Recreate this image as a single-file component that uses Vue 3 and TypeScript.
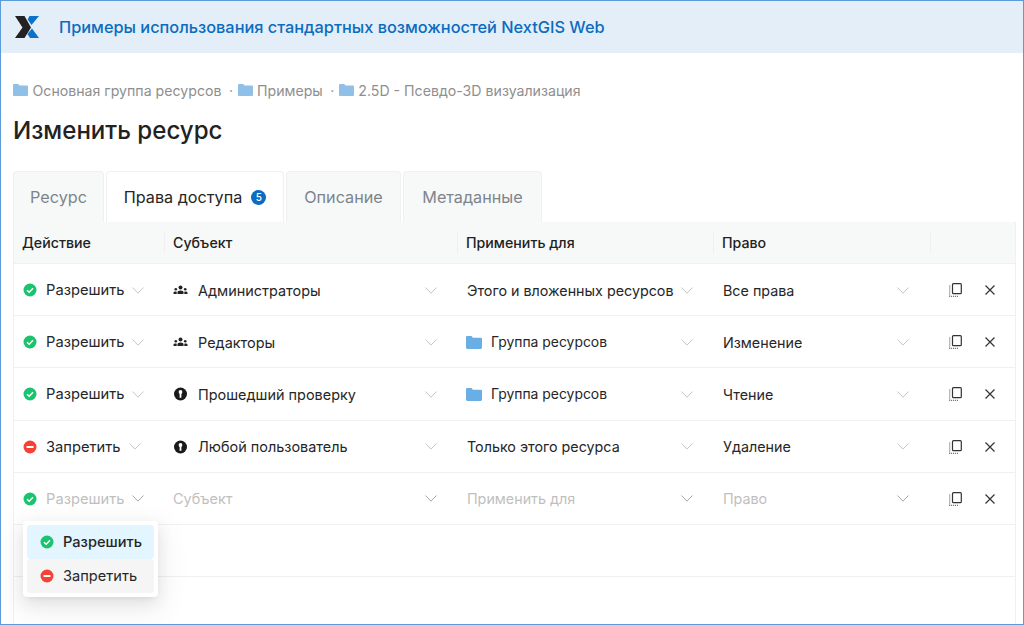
<script setup lang="ts">
interface Row {
  allow: boolean
  action: string
  subjectIcon: '' | 'group' | 'info'
  subject: string
  folder: boolean
  scope: string
  right: string
  placeholder?: boolean
}

const rows: Row[] = [
  { allow: true, action: 'Разрешить', subjectIcon: 'group', subject: 'Администраторы', folder: false, scope: 'Этого и вложенных ресурсов', right: 'Все права' },
  { allow: true, action: 'Разрешить', subjectIcon: 'group', subject: 'Редакторы', folder: true, scope: 'Группа ресурсов', right: 'Изменение' },
  { allow: true, action: 'Разрешить', subjectIcon: 'info', subject: 'Прошедший проверку', folder: true, scope: 'Группа ресурсов', right: 'Чтение' },
  { allow: false, action: 'Запретить', subjectIcon: 'info', subject: 'Любой пользователь', folder: false, scope: 'Только этого ресурса', right: 'Удаление' },
  { allow: true, action: 'Разрешить', subjectIcon: '', subject: 'Субъект', folder: false, scope: 'Применить для', right: 'Право', placeholder: true },
]
const crumbs = ['Основная группа ресурсов', 'Примеры', '2.5D - Псевдо-3D визуализация']
const headers = ['Действие', 'Субъект', 'Применить для', 'Право', '']
const tabs = [
  { label: 'Ресурс', active: false, badge: 0 },
  { label: 'Права доступа', active: true, badge: 5 },
  { label: 'Описание', active: false, badge: 0 },
  { label: 'Метаданные', active: false, badge: 0 },
]
</script>

<template>
  <div class="page">
    <header class="top">
      <svg class="logo" width="26" height="24" viewBox="0 0 26 24">
        <path d="M1 1h9.500L17 12.500 10.500 23H1l7.500-10.500z" fill="#222" />
        <path d="M15.500 1H25l-7.500 9-3.800-5.600z" fill="#0b72c9" />
        <path d="M18 13.500 25 23h-9l-2.600-4z" fill="#0b72c9" />
      </svg>
      <span class="site">Примеры использования стандартных возможностей NextGIS Web</span>
    </header>

    <main class="content">
      <nav class="crumbs">
        <template v-for="(c, i) in crumbs" :key="c">
          <span v-if="i" class="dot">·</span>
          <svg class="folder crumb-folder" width="15" height="12" viewBox="0 0 15 12"><path d="M0 1.200C0 .5.500 0 1.200 0h4l1.300 1.500h7.300c.7 0 1.200.5 1.200 1.200v8c0 .7-.5 1.300-1.200 1.300H1.200C.5 12 0 11.400 0 10.700z" fill="#90c0e8" /></svg>
          <span>{{ c }}</span>
        </template>
      </nav>
      <h1>Изменить ресурс</h1>

      <div class="tabs">
        <div v-for="t in tabs" :key="t.label" class="tab" :class="{ active: t.active }">
          {{ t.label }}<span v-if="t.badge" class="badge">{{ t.badge }}</span>
        </div>
      </div>

      <div class="table">
        <div class="row head">
          <div v-for="(h, i) in headers" :key="i" class="hcell"><span class="htext" :class="{ sep: i > 0 }">{{ h }}</span></div>
        </div>
        <div v-for="(r, i) in rows" :key="i" class="row body" :class="{ ph: r.placeholder }">
          <div class="cell action">
            <svg class="status" width="14" height="14" viewBox="0 0 14 14">
              <circle cx="7" cy="7" r="6.500" :fill="r.allow ? '#1cc36e' : '#f44336'" />
              <path v-if="r.allow" d="M4 7.200 6.200 9.300 10 5.300" fill="none" stroke="#fff" stroke-width="1.500" />
              <rect v-else x="3.500" y="6" width="7" height="2" fill="#fff" />
            </svg>
            <span class="val">{{ r.action }}</span>
            <svg class="chev" width="12" height="7" viewBox="0 0 12 7"><path d="M.5.500 6 6.200 11.500.5" fill="none" stroke="currentColor" stroke-width="1" /></svg>
          </div>
          <div class="cell subject">
            <svg v-if="r.subjectIcon === 'group'" class="sub" width="15" height="14" viewBox="0 0 15 14">
              <circle cx="7.500" cy="4.500" r="2" fill="#222" />
              <path d="M4.500 11V9.300c0-1 1-1.800 3-1.800s3 .8 3 1.800V11z" fill="#222" />
              <circle cx="2.800" cy="6.300" r="1.300" fill="#222" /><circle cx="12.200" cy="6.300" r="1.300" fill="#222" />
              <path d="M.5 11V9.800c0-.7.8-1.200 2.300-1.200l.9.100V11zM14.500 11V9.800c0-.7-.8-1.200-2.300-1.200l-.9.100V11z" fill="#222" />
            </svg>
            <svg v-else-if="r.subjectIcon === 'info'" class="sub" width="15" height="14" viewBox="0 0 14 14">
              <circle cx="7" cy="7" r="6.500" fill="#1a1a1a" />
              <circle cx="7" cy="5" r="1.900" fill="#fff" />
              <rect x="6.100" y="6" width="1.800" height="4.800" fill="#fff" />
            </svg>
            <span class="val">{{ r.subject }}</span>
            <svg class="chev end" width="12" height="7" viewBox="0 0 12 7"><path d="M.5.500 6 6.200 11.500.5" fill="none" stroke="currentColor" stroke-width="1" /></svg>
          </div>
          <div class="cell scope">
            <svg v-if="r.folder" class="folder scope-folder" width="16" height="13" viewBox="0 0 15 12"><path d="M0 1.200C0 .5.500 0 1.200 0h4l1.300 1.500h7.300c.7 0 1.200.5 1.200 1.200v8c0 .7-.5 1.300-1.200 1.300H1.200C.5 12 0 11.400 0 10.700z" fill="#6aaee6" /></svg>
            <span class="val">{{ r.scope }}</span>
            <svg class="chev end" width="12" height="7" viewBox="0 0 12 7"><path d="M.5.500 6 6.200 11.500.5" fill="none" stroke="currentColor" stroke-width="1" /></svg>
          </div>
          <div class="cell perm">
            <span class="val">{{ r.right }}</span>
            <svg class="chev end" width="12" height="7" viewBox="0 0 12 7"><path d="M.5.500 6 6.200 11.500.5" fill="none" stroke="currentColor" stroke-width="1" /></svg>
          </div>
          <div class="cell tools">
            <svg width="13" height="14" viewBox="0 0 13 14">
              <rect x="3.500" y=".7" width="8.800" height="10" rx="1" fill="none" stroke="#333" stroke-width="1.200" />
              <path d="M.7 2.500v10.800h9" fill="none" stroke="#666" stroke-width="1.200" stroke-dasharray="1 1" />
            </svg>
            <svg width="10" height="10" viewBox="0 0 10 10"><path d="M.5.500l9 9M9.500.5l-9 9" fill="none" stroke="#333" stroke-width="1.200" /></svg>
          </div>
        </div>
        <div class="row empty"></div>
      </div>
    </main>

    <div class="menu">
      <div class="opt sel">
        <svg width="14" height="14" viewBox="0 0 14 14"><circle cx="7" cy="7" r="6.500" fill="#1cc36e" /><path d="M4 7.200 6.200 9.300 10 5.300" fill="none" stroke="#fff" stroke-width="1.500" /></svg>
        Разрешить
      </div>
      <div class="opt hov">
        <svg width="14" height="14" viewBox="0 0 14 14"><circle cx="7" cy="7" r="6.500" fill="#f44336" /><rect x="3.500" y="6" width="7" height="2" fill="#fff" /></svg>
        Запретить
      </div>
    </div>
  </div>
</template>

<style>
html, body { margin: 0; background: #fff; }
</style>

<style scoped>
.page {
  position: relative;
  box-sizing: border-box;
  width: 1024px;
  height: 625px;
  overflow: hidden;
  border: 1px solid #5b9bd9;
  font-family: Inter, Roboto, "Liberation Sans", sans-serif;
  font-size: 14.300px;
  color: #262626;
}
.top {
  display: flex;
  align-items: center;
  height: 52px;
  background: #e3eef8;
  padding-left: 13px;
  gap: 19px;
}
.site { color: #0b6cc0; font-size: 16.330px; font-weight: 500; margin-bottom: 1px; }
.content { padding: 0 7px 0 12px; }
.crumbs {
  display: flex;
  align-items: center;
  margin-top: 28px;
  height: 18px;
  color: #8f8f8f;
  font-size: 14.150px;
}
.crumb-folder { margin-right: 4.500px; }
.dot { margin: 0 4.500px 0 7.500px; }
h1 {
  margin: 16px 0 0;
  font-size: 24.100px;
  line-height: 32px;
  font-weight: 500;
  color: #222;
}
.tabs {
  display: grid;
  grid-template-columns: 91px 178px 115px 139px;
  gap: 2px;
  margin-top: 24px;
  height: 51px;
}
.tab {
  display: flex;
  align-items: center;
  justify-content: center;
  box-sizing: border-box;
  background: #f7f8f8;
  border: 1px solid #f0f0f0;
  border-bottom: none;
  border-radius: 4px 4px 0 0;
  font-size: 16.200px;
  white-space: nowrap;
  color: #7d858c;
}
.tab.active { background: #fff; color: #262626; }
.badge {
  display: inline-flex;
  align-items: center;
  justify-content: center;
  width: 15px;
  height: 15px;
  margin-left: 9px;
  border-radius: 50%;
  background: #0b6cc0;
  color: #fff;
  font-size: 10px;
  font-weight: 500;
}
.table { border-right: 1px solid #f0f0f0; border-left: 1px solid #f0f0f0; height: 402px; }
.row {
  display: grid;
  grid-template-columns: 150px 293px 256px 217px 1fr;
  border-bottom: 1px solid #f0f0f0;
}
.head { background: #f7f8f8; box-sizing: border-box; height: 42px; }
.hcell { display: flex; align-items: center; font-weight: 500; font-size: 14.200px; }
.htext { display: flex; align-items: center; width: 100%; height: 22px; padding-left: 8px; color: #222; }
.htext.sep { border-left: 1px solid #f0f0f0; }
.body { height: 51.200px; }
.empty { height: 51px; }
.cell { display: flex; align-items: center; min-width: 0; padding: 1px 0 0 9px; }
.action .val { font-size: 14.700px; }
.subject .val { font-size: 14.450px; }
.status { margin-right: 9px; flex: none; }
.chev { color: #c6c6c6; flex: none; margin-left: 8px; }
.chev.end { margin-left: auto; margin-right: 20px; }
.perm { padding-left: 10px; }
.perm .chev.end { margin-right: 21px; }
.sub { margin-right: 10px; flex: none; }
.scope-folder { margin-right: 9px; }
.scope-folder + .val { font-size: 13.900px; }
.scope .val:first-child { margin-left: 1px; }
.ph .val { color: #bfbfbf; }
.ph .chev { color: #a8a8a8; }
.tools { justify-content: flex-end; gap: 23px; padding-right: 20px; }
.menu {
  position: absolute;
  left: 22px;
  top: 520px;
  width: 135px;
  box-sizing: border-box;
  padding: 4px;
  background: #fff;
  border-radius: 4px;
  font-size: 14.600px;
  box-shadow: 0 6px 16px rgba(0,0,0,.08), 0 3px 6px -4px rgba(0,0,0,.12), 0 9px 28px 8px rgba(0,0,0,.05);
  z-index: 5;
}
.opt {
  display: flex;
  align-items: center;
  gap: 9px;
  height: 34px;
  padding: 0 0 1px 13px;
  box-sizing: border-box;
  border-radius: 4px;
}
.sel { background: #e3f5ff; font-weight: 500; }
.hov { background: #f5f5f5; }
</style>
